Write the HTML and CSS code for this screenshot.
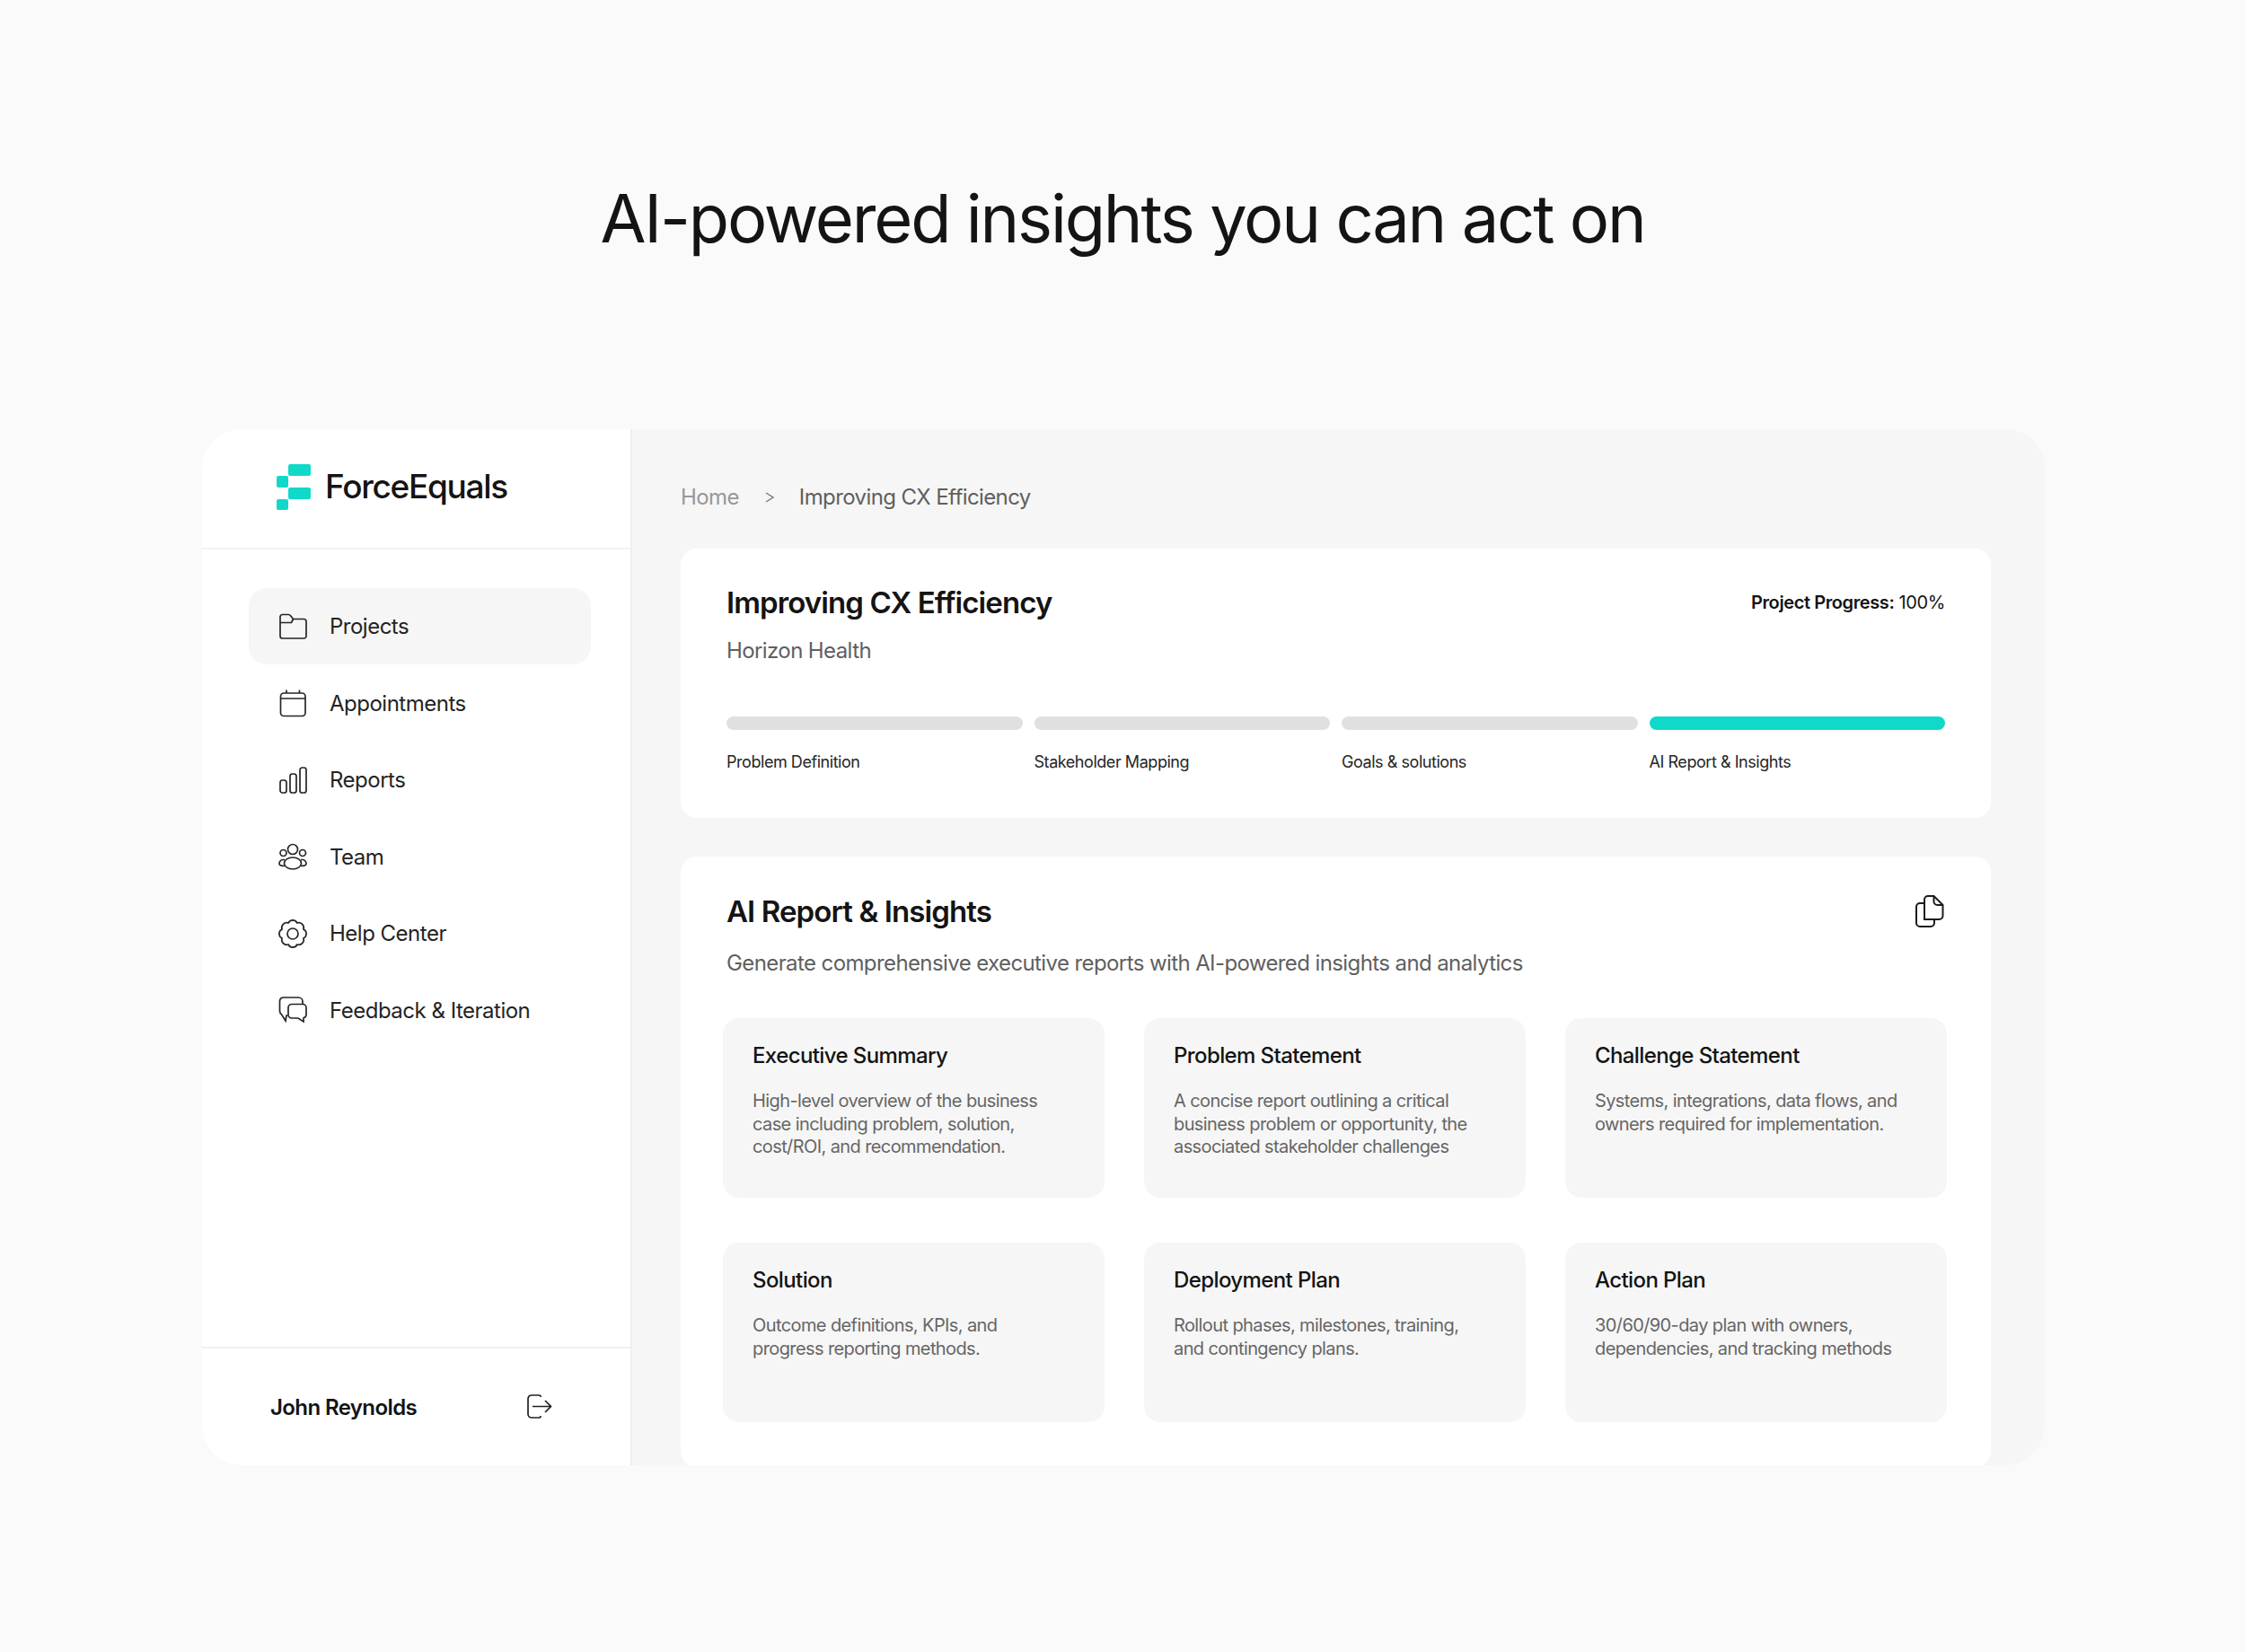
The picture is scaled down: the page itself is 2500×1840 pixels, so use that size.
FILE: index.html
```html
<!DOCTYPE html>
<html lang="en">
<head>
    <meta charset="UTF-8">
    <meta name="viewport" content="width=device-width, initial-scale=1.0">
    <title>ForceEquals</title>
    <link rel="stylesheet" href="styles.css">
</head>
<body>
    <h1 class="hero-title">AI-powered insights you can act on</h1>

    <div class="app">
        <aside class="sidebar">
            <div class="brand">
                <svg class="brand-mark" width="38" height="51" viewBox="0 0 38 51">
                    <rect x="13" y="0" width="25" height="13" rx="2"/>
                    <rect x="0" y="13" width="13" height="13" rx="2"/>
                    <rect x="13" y="26" width="25" height="13" rx="2"/>
                    <rect x="0" y="39" width="13" height="12" rx="2"/>
                </svg>
                <span class="brand-name">ForceEquals</span>
            </div>

            <nav class="nav">
                <a class="nav-item active">
                    <svg class="icon" viewBox="0 0 32 32"><path d="M2 26V5a2.5 2.5 0 0 1 2.5-2.5H11c1.4 0 2.2.6 3 1.7L16.500 7.500H28.500a2.500 2.500 0 0 1 2.500 2.500V26.500a2.500 2.500 0 0 1-2.500 2.500H4.500A2.500 2.500 0 0 1 2 26.500Z"/><path d="M2 11.500H14.500L16.500 7.500"/></svg>
                    Projects
                </a>
                <a class="nav-item">
                    <svg class="icon" viewBox="0 0 32 32"><rect x="2.500" y="5" width="27.500" height="25.500" rx="3.500"/><path d="M2.500 11H30M9 1.500V5M23.500 1.500V5"/></svg>
                    Appointments
                </a>
                <a class="nav-item">
                    <svg class="icon" viewBox="0 0 32 32"><rect x="2" y="16" width="7" height="14" rx="2.500"/><rect x="13" y="9" width="7" height="21" rx="2.500"/><rect x="24" y="2" width="7" height="28" rx="2.500"/></svg>
                    Reports
                </a>
                <a class="nav-item">
                    <svg class="icon" viewBox="0 0 32 32"><circle cx="16" cy="8" r="5.500"/><circle cx="5.500" cy="12" r="3.500"/><circle cx="27" cy="12" r="3.500"/><ellipse cx="16" cy="23.500" rx="9.500" ry="6.500"/><path d="M7 19.500H5C2.500 19.500 1 22 1 24c0 1.500 2 2.500 6 2.500M25 19.500h2c2.500 0 4 2.500 4 4.500 0 1.500-2 2.500-6 2.500"/></svg>
                    Team
                </a>
                <a class="nav-item">
                    <svg class="icon" viewBox="0 0 32 32"><path d="M11 4A5.600 5.600 0 0 1 21 4A5.600 5.600 0 0 1 28 11A5.600 5.600 0 0 1 28 21A5.600 5.600 0 0 1 21 28A5.600 5.600 0 0 1 11 28A5.600 5.600 0 0 1 4 21A5.600 5.600 0 0 1 4 11A5.600 5.600 0 0 1 11 4Z"/><circle cx="16" cy="16" r="6"/></svg>
                    Help Center
                </a>
                <a class="nav-item">
                    <svg class="icon" viewBox="0 0 32 32"><path d="M10.500 22H9l-1 6-4-6.500C2.500 20.500 1.500 19 1.500 17V6a4 4 0 0 1 4-4h17a4.500 4.500 0 0 1 4.500 4.500V9"/><path d="M15 9.500H27a4 4 0 0 1 4 4V21a4 4 0 0 1-3 3.800V29l-6-4H15a4 4 0 0 1-4-4V13.500a4 4 0 0 1 4-4Z"/></svg>
                    Feedback &amp; Iteration
                </a>
            </nav>

            <div class="user-row">
                <span class="user-name">John Reynolds</span>
                <svg class="logout" viewBox="0 0 28 28"><path d="M15 3V2.500C15 1.500 14 1 13 1H5a4 4 0 0 0-4 4v17a4 4 0 0 0 4 4h8c1 0 2-.5 2-1.500V24"/><path d="M6 13.500H26M20 7l6.500 6.500L20 20"/></svg>
            </div>
        </aside>

        <main class="main">
            <div class="breadcrumb">
                <span class="crumb-home">Home</span>
                <svg class="crumb-sep" viewBox="0 0 10 12"><path d="M1 1l8 5-8 5"/></svg>
                <span>Improving CX Efficiency</span>
            </div>

            <section class="card progress-card">
                <div class="card-head">
                    <h2>Improving CX Efficiency</h2>
                    <p class="progress-text"><b>Project Progress:</b> 100%</p>
                </div>
                <p class="card-sub sub-small">Horizon Health</p>
                <div class="steps">
                    <div class="step"><div class="bar"></div><span>Problem Definition</span></div>
                    <div class="step"><div class="bar"></div><span>Stakeholder Mapping</span></div>
                    <div class="step"><div class="bar"></div><span>Goals &amp; solutions</span></div>
                    <div class="step"><div class="bar bar-done"></div><span>AI Report &amp; Insights</span></div>
                </div>
            </section>

            <section class="card report-card">
                <div class="card-head">
                    <h2>AI Report &amp; Insights</h2>
                    <svg class="copy" viewBox="0 0 32 36"><path d="M10 27V5a4 4 0 0 1 4-4h6.500L30.500 11V23a4 4 0 0 1-4 4Z"/><path d="M20.500 1v6a4 4 0 0 0 4 4h6"/><path d="M10 9H5a4 4 0 0 0-4 4v18a4 4 0 0 0 4 4h12a4 4 0 0 0 4-4v-4"/></svg>
                </div>
                <p class="card-sub">Generate comprehensive executive reports with AI-powered insights and analytics</p>
                <div class="report-grid">
                    <div class="report-item">
                        <h3>Executive Summary</h3>
                        <p>High-level overview of the business<br>case including problem, solution,<br>cost/ROI, and recommendation.</p>
                    </div>
                    <div class="report-item">
                        <h3>Problem Statement</h3>
                        <p>A concise report outlining a critical<br>business problem or opportunity, the<br>associated stakeholder challenges</p>
                    </div>
                    <div class="report-item">
                        <h3>Challenge Statement</h3>
                        <p>Systems, integrations, data flows, and<br>owners required for implementation.</p>
                    </div>
                    <div class="report-item">
                        <h3>Solution</h3>
                        <p>Outcome definitions, KPIs, and<br>progress reporting methods.</p>
                    </div>
                    <div class="report-item">
                        <h3>Deployment Plan</h3>
                        <p>Rollout phases, milestones, training,<br>and contingency plans.</p>
                    </div>
                    <div class="report-item">
                        <h3>Action Plan</h3>
                        <p>30/60/90-day plan with owners,<br>dependencies, and tracking methods</p>
                    </div>
                </div>
            </section>
        </main>
    </div>
</body>
</html>
```

FILE: styles.css
```css
* {
    box-sizing: border-box;
}
body {
    font-family: Inter, "Noto Sans", sans-serif;
    margin: 0;
    min-height: 1840px;
    background-color: #fafafa;
    color: #141414;
}
.hero-title {
    margin: 0;
    padding-top: 198px;
    height: 478px;
    font-size: 74px;
    line-height: 90px;
    font-weight: 400;
    letter-spacing: -2.2px;
    text-align: center;
}
.app {
    display: flex;
    width: 2052px;
    height: 1154px;
    margin-left: 225px;
    border-radius: 44px;
    overflow: hidden;
    background-color: #f6f6f6;
}
.sidebar {
    display: flex;
    flex-direction: column;
    flex: 0 0 479px;
    background: #fff;
    border-right: 2px solid #eeeeee;
}
.brand {
    display: flex;
    align-items: flex-start;
    height: 134px;
    padding: 39px 0 0 83px;
    border-bottom: 2px solid #f2f2f2;
}
.brand-mark {
    fill: #10d9c9;
}
.brand-name {
    margin-left: 16px;
    font-size: 37px;
    line-height: 50px;
    font-weight: 500;
    letter-spacing: -1.3px;
}
.nav {
    display: flex;
    flex-direction: column;
    gap: 0.5px;
    flex: 1;
    padding: 43px 44px 0 52px;
}
.nav-item {
    display: flex;
    align-items: center;
    gap: 25px;
    height: 85px;
    padding-left: 33px;
    border-radius: 20px;
    font-size: 24px;
    letter-spacing: -0.5px;
    color: #242424;
}
.nav-item.active {
    background-color: #f6f6f6;
}
.icon {
    flex: none;
    width: 32px;
    height: 32px;
    fill: none;
    stroke: #262626;
    stroke-width: 1.7;
}
.user-row {
    display: flex;
    align-items: center;
    justify-content: space-between;
    height: 132px;
    padding: 0 87px 0 76px;
    border-top: 2px solid #f0f0f0;
}
.user-name {
    font-size: 24px;
    font-weight: 600;
    letter-spacing: -0.6px;
}
.logout {
    width: 28px;
    height: 28px;
    fill: none;
    stroke: #222;
    stroke-width: 1.7;
}
.main {
    flex: 1;
    padding: 55px 60px 0 54px;
    min-width: 0;
}
.breadcrumb {
    display: flex;
    align-items: center;
    height: 40px;
    margin-bottom: 38px;
    font-size: 24px;
    letter-spacing: -0.6px;
    color: #5f5f5f;
}
.crumb-home {
    color: #989898;
}
.crumb-sep {
    width: 10px;
    height: 12px;
    margin: 2px 28px 0 29px;
    fill: none;
    stroke: #777;
    stroke-width: 1.3;
}
.card {
    background: #fff;
    border-radius: 18px;
    padding: 38px 51px 50px;
}
.card-head {
    display: flex;
    align-items: center;
    justify-content: space-between;
    height: 44px;
}
.card h2 {
    margin: 0;
    font-size: 33px;
    line-height: 44px;
    font-weight: 600;
    letter-spacing: -0.9px;
}
.progress-text {
    margin: 0;
    font-size: 20px;
    letter-spacing: -0.4px;
}
.progress-text b {
    font-weight: 600;
}
.card-sub {
    margin: 20px 0 0;
    font-size: 24px;
    line-height: 32px;
    letter-spacing: -0.6px;
    color: #5f5f5f;
}
.sub-small {
    margin-top: 16px;
}
.steps {
    display: grid;
    grid-template-columns: repeat(4, 1fr);
    gap: 13px;
    margin-top: 57px;
}
.bar {
    height: 15px;
    border-radius: 8px;
    background-color: #dfe1e0;
}
.bar-done {
    background-color: #10d9c9;
}
.step span {
    display: block;
    margin-top: 24px;
    font-size: 18px;
    line-height: 24px;
    letter-spacing: -0.45px;
    color: #262626;
}
.report-card {
    margin-top: 43px;
    padding-top: 39px;
}
.report-grid {
    display: grid;
    grid-template-columns: repeat(3, 425px);
    column-gap: 44px;
    row-gap: 50px;
    margin: 45px -5px 0 -4px;
}
.report-item {
    height: 200px;
    padding: 26px 33px 0;
    border-radius: 18px;
    background-color: #f6f6f6;
}
.report-item h3 {
    margin: 0 0 22px;
    font-size: 24px;
    line-height: 32px;
    font-weight: 500;
    letter-spacing: -0.6px;
}
.report-item p {
    margin: 0;
    font-size: 20px;
    line-height: 25.5px;
    letter-spacing: -0.6px;
    color: #666;
}
.copy {
    width: 32px;
    height: 36px;
    margin-right: 1px;
    fill: none;
    stroke: #1c1c1c;
    stroke-width: 2;
}
```
